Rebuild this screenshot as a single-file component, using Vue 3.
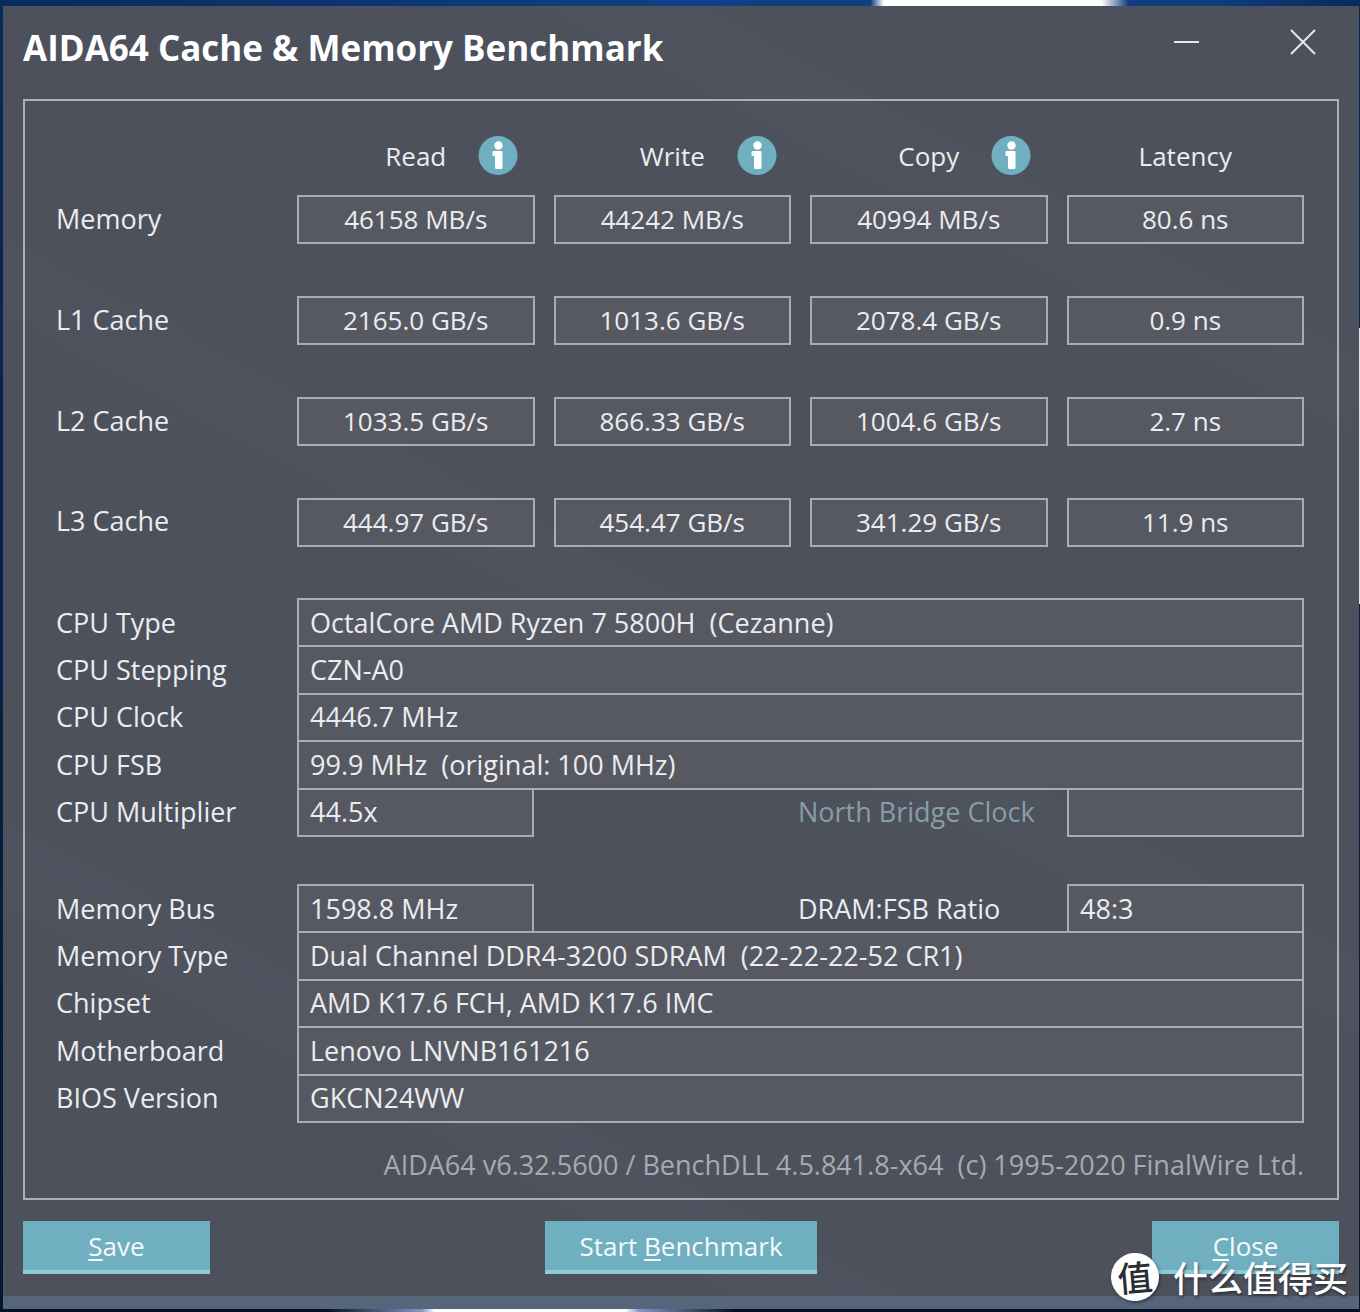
<script setup>
const columns = [
  { name: 'Read', info: true },
  { name: 'Write', info: true },
  { name: 'Copy', info: true },
  { name: 'Latency', info: false },
]

const results = [
  { name: 'Memory', values: ['46158 MB/s', '44242 MB/s', '40994 MB/s', '80.6 ns'] },
  { name: 'L1 Cache', values: ['2165.0 GB/s', '1013.6 GB/s', '2078.4 GB/s', '0.9 ns'] },
  { name: 'L2 Cache', values: ['1033.5 GB/s', '866.33 GB/s', '1004.6 GB/s', '2.7 ns'] },
  { name: 'L3 Cache', values: ['444.97 GB/s', '454.47 GB/s', '341.29 GB/s', '11.9 ns'] },
]

const groups = [
  [
    { id: 'cpu-type', label: 'CPU Type', value: 'OctalCore AMD Ryzen 7 5800H  (Cezanne)' },
    { id: 'cpu-stepping', label: 'CPU Stepping', value: 'CZN-A0' },
    { id: 'cpu-clock', label: 'CPU Clock', value: '4446.7 MHz' },
    { id: 'cpu-fsb', label: 'CPU FSB', value: '99.9 MHz  (original: 100 MHz)' },
    {
      id: 'cpu-multiplier',
      label: 'CPU Multiplier',
      value: '44.5x',
      side: { id: 'nb-clock', label: 'North Bridge Clock', value: '', dim: true },
    },
  ],
  [
    {
      id: 'memory-bus',
      label: 'Memory Bus',
      value: '1598.8 MHz',
      side: { id: 'dram-ratio', label: 'DRAM:FSB Ratio', value: '48:3', dim: false },
    },
    { id: 'memory-type', label: 'Memory Type', value: 'Dual Channel DDR4-3200 SDRAM  (22-22-22-52 CR1)' },
    { id: 'chipset', label: 'Chipset', value: 'AMD K17.6 FCH, AMD K17.6 IMC' },
    { id: 'motherboard', label: 'Motherboard', value: 'Lenovo LNVNB161216' },
    { id: 'bios', label: 'BIOS Version', value: 'GKCN24WW' },
  ],
]
</script>

<template>
  <div class="desktop">
    <main class="window">
      <header class="titlebar">
        <h1>AIDA64 Cache &amp; Memory Benchmark</h1>
        <div class="controls">
          <button type="button" aria-label="Minimize">
            <svg width="26" height="26" viewBox="0 0 26 26"><path d="M0 13H25" /></svg>
          </button>
          <button type="button" aria-label="Close window">
            <svg width="26" height="26" viewBox="0 0 26 26"><path d="M1 1L25 25M25 1L1 25" /></svg>
          </button>
        </div>
      </header>

      <section class="panel">
        <table class="results">
          <thead>
            <tr>
              <td class="name"></td>
              <th v-for="column in columns" :key="column.name" scope="col">
                <div class="heading">
                  <span class="heading-text">{{ column.name }}</span>
                  <button v-if="column.info" type="button" class="info" :aria-label="column.name + ' info'">
                    <svg width="40" height="40" viewBox="0 0 40 40">
                      <circle cx="20" cy="19.500" r="19.500" fill="#70afbf" />
                      <circle cx="20.500" cy="9.500" r="4.200" fill="#fff" />
                      <path d="M14.500 16Q14.500 15 15.500 15H23.500Q24.500 15 24.500 16V31.500Q24.500 33 23 33H18.500Q17 33 17 31.500V20H16Q14.500 20 14.500 18.500Z" fill="#fff" />
                    </svg>
                  </button>
                </div>
              </th>
            </tr>
          </thead>
          <tbody>
            <tr v-for="row in results" :key="row.name">
              <th class="name" scope="row">{{ row.name }}</th>
              <td v-for="value in row.values" :key="value"><div class="box">{{ value }}</div></td>
            </tr>
          </tbody>
        </table>

        <div v-for="(group, index) in groups" :key="index" class="group">
          <div v-for="item in group" :key="item.id" class="row">
            <label class="row-label" :for="item.id">{{ item.label }}</label>
            <input :id="item.id" class="field" :class="{ short: item.side }" type="text" readonly :value="item.value" />
            <template v-if="item.side">
              <label class="side-label" :class="{ dim: item.side.dim }" :for="item.side.id">{{ item.side.label }}</label>
              <input :id="item.side.id" class="field short" type="text" readonly :value="item.side.value" />
            </template>
          </div>
        </div>

        <p class="version">AIDA64 v6.32.5600 / BenchDLL 4.5.841.8-x64&nbsp; (c) 1995-2020 FinalWire Ltd.</p>
      </section>

      <footer class="actions">
        <button type="button" class="action"><u>S</u>ave</button>
        <button type="button" class="action wide">Start <u>B</u>enchmark</button>
        <button type="button" class="action"><u>C</u>lose</button>
      </footer>
    </main>

    <div class="watermark">
      <span class="seal">值</span>
      <span>什么值得买</span>
    </div>
  </div>
</template>

<style>
body {
  margin: 0;
  background: #061c3e;
}
</style>

<style scoped>
.desktop {
  position: relative;
  box-sizing: border-box;
  min-height: 100vh;
  padding: 6px 1px 4px 3px;
  display: flex;
  background:
    linear-gradient(90deg, transparent 64%, #fff 65%, #fff 81%, transparent 83%) top / 100% 6px no-repeat,
    linear-gradient(90deg, #021127 24%, #8297c2 31%, #fff 32%, #fff 46%, #8297c2 47%, #021127 54%) bottom / 100% 4px no-repeat,
    linear-gradient(90deg, #082a5c, #0f4085 50%, #0f3c7c 90%, #082a5c) top / 100% 6px no-repeat,
    linear-gradient(transparent 25%, #e4e8ec 25%, #e4e8ec 46%, transparent 46%) right / 1px 100% no-repeat,
    linear-gradient(#082a5c, #061730);
  color: #ececef;
  font-family: "Open Sans", "Noto Sans", "Noto Sans CJK SC", sans-serif;
  font-size: 27px;
  line-height: 36px;
}

.window {
  flex: 1;
  box-sizing: border-box;
  padding: 0 20px;
  border-bottom: 13px solid #566579;
  background:
    linear-gradient(28deg, transparent 18%, rgba(84, 98, 116, 0.16) 23%, transparent 24%, transparent 47%, rgba(84, 98, 116, 0.12) 52%, transparent 53%, transparent 76%, rgba(84, 94, 108, 0.14) 82%, transparent 83%),
    #4d515b;
}

.titlebar {
  display: flex;
  justify-content: space-between;
  align-items: flex-start;
  height: 93px;
}

h1 {
  margin: 18px 0 0;
  color: #fff;
  font-size: 35px;
  line-height: 48px;
  font-weight: 700;
}

.controls {
  display: flex;
  gap: 90px;
  margin: 23px 23px 0 0;
}

button {
  padding: 0;
  border: 0;
  background: none;
  color: inherit;
  font: inherit;
}

button svg {
  display: block;
}

.controls path {
  fill: none;
  stroke: #e6e8ea;
  stroke-width: 2;
}

.panel {
  box-sizing: border-box;
  padding: 30px 33px 15px 31px;
  border: 2px solid #adb1b7;
}

.results {
  width: 100%;
  border-collapse: collapse;
  table-layout: fixed;
}

.results th,
.results td {
  padding: 0 0 52px 19px;
  font-weight: 400;
}

.results thead th {
  padding-bottom: 15px;
}

.results .name {
  width: 222px;
  padding: 0 0 54px;
  text-align: left;
}

.results thead .name {
  padding-bottom: 0;
}

.results tbody tr:last-child td {
  padding-bottom: 0;
}

.results tbody tr:last-child .name {
  padding-bottom: 4px;
}

.heading {
  display: grid;
  grid-template-columns: 1fr auto 1fr;
  align-items: center;
  height: 49px;
  font-size: 26px;
}

.heading-text {
  grid-column: 2;
}

.info {
  justify-self: start;
  margin-left: 32px;
}

.box,
.field {
  box-sizing: border-box;
  border: 2px solid #a9adb3;
  background: #575962;
}

.box {
  display: flex;
  justify-content: center;
  align-items: center;
  height: 49px;
  padding-bottom: 2px;
  font-size: 26px;
}

.group {
  display: grid;
  grid-auto-rows: 1fr;
  min-height: 237px;
  margin-top: 49px;
}

.results + .group {
  margin-top: 51px;
}

.row {
  display: flex;
  align-items: center;
}

.row-label,
.side-label {
  padding-top: 2px;
}

.row-label {
  flex: 0 0 241px;
}

.field {
  flex: 1;
  align-self: stretch;
  min-width: 0;
  margin: 0 0 -2px;
  padding: 0 11px;
  border-radius: 0;
  outline: 0;
  color: inherit;
  font: inherit;
}

.field.short {
  flex: 0 0 237px;
}

.side-label {
  flex: 0 0 269px;
  margin-left: auto;
}

.side-label.dim {
  color: #879ea6;
}

.version {
  margin: 26px 0 0;
  color: #a7aab0;
  text-align: right;
}

.actions {
  display: flex;
  justify-content: space-between;
  padding: 21px 0 22px;
}

.action {
  box-sizing: border-box;
  width: 187px;
  height: 53px;
  border-bottom: 4px solid #8accd8;
  background: #70afbf;
  color: #f4fbfc;
  font-size: 26px;
}

.action.wide {
  width: 272px;
}

.action u {
  text-decoration-thickness: 2px;
  text-underline-offset: 3px;
}

.watermark {
  position: absolute;
  right: 12px;
  bottom: 12px;
  display: flex;
  align-items: center;
  gap: 14px;
  color: #fff;
  font-family: "Noto Sans CJK SC", sans-serif;
  font-size: 35px;
  line-height: 48px;
  font-weight: 500;
  text-shadow: 1px 2px 3px rgba(30, 34, 42, 0.7);
}

.seal {
  width: 48px;
  height: 48px;
  border-radius: 50%;
  background: #fff;
  box-shadow: 1px 2px 3px rgba(30, 34, 42, 0.6);
  color: #2b2d33;
  line-height: 46px;
  text-align: center;
  text-shadow: none;
  transform: rotate(-5deg);
}
</style>
